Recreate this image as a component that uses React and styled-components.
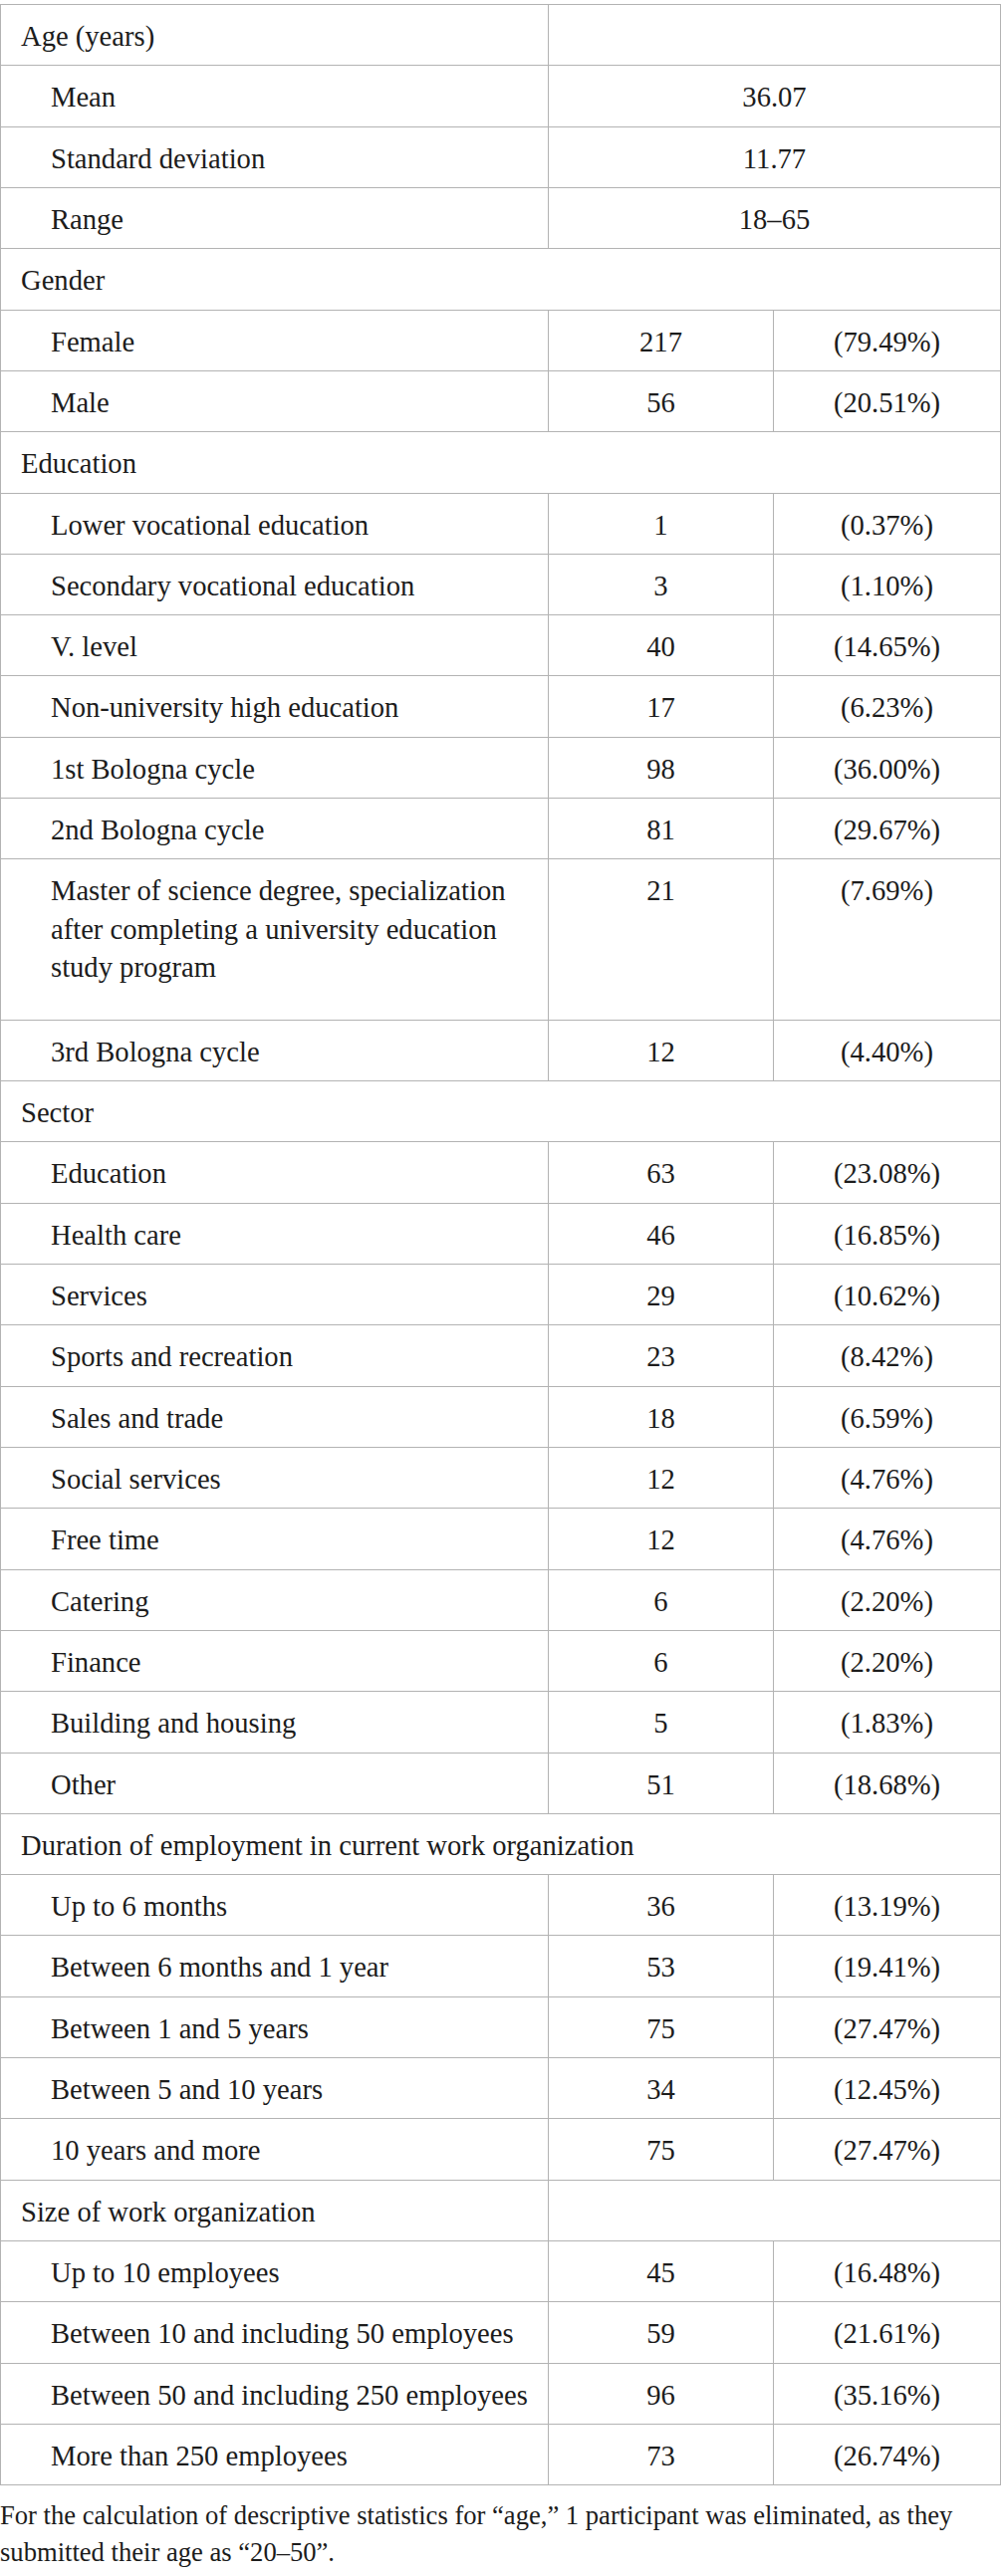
import React from "react";
import styled, { createGlobalStyle } from "styled-components";

const GlobalStyle = createGlobalStyle`
  html, body {
    margin: 0;
    padding: 0;
    background: #ffffff;
  }
  body {
    font-family: "Liberation Serif", "Times New Roman", serif;
    color: #1c1c1c;
  }
`;

const Page = styled.div`
  width: 1005px;
  padding-top: 4px;
`;

const Table = styled.div`
  display: grid;
  grid-template-columns: 550px 226px 228px;
  border-top: 1px solid #b3b3b3;
  border-left: 1px solid #b3b3b3;
  font-size: 28.6px;
  line-height: 38.3px;
`;

const Cell = styled.div`
  grid-column: span ${(p) => p.$span || 1};
  border-right: 1px solid #b3b3b3;
  border-bottom: 1px solid #b3b3b3;
  padding: 13px 20px ${(p) => (p.$tall ? 32.5 : 9.03)}px
    ${(p) => (p.$indent ? 50 : 20)}px;
  text-align: left;
  white-space: nowrap;
`;

const ValueCell = styled(Cell)`
  padding-left: 10px;
  padding-right: 10px;
  text-align: center;
`;

const Note = styled.p`
  margin: 12px 0 0;
  font-size: 26.6px;
  line-height: 36.7px;
  max-width: 1000px;
`;

const groups = [
  {
    title: "Age (years)",
    split: true,
    rows: [
      { label: "Mean", value: "36.07" },
      { label: "Standard deviation", value: "11.77" },
      { label: "Range", value: "18–65" },
    ],
  },
  {
    title: "Gender",
    rows: [
      { label: "Female", n: "217", pct: "(79.49%)" },
      { label: "Male", n: "56", pct: "(20.51%)" },
    ],
  },
  {
    title: "Education",
    rows: [
      { label: "Lower vocational education", n: "1", pct: "(0.37%)" },
      { label: "Secondary vocational education", n: "3", pct: "(1.10%)" },
      { label: "V. level", n: "40", pct: "(14.65%)" },
      { label: "Non-university high education", n: "17", pct: "(6.23%)" },
      { label: "1st Bologna cycle", n: "98", pct: "(36.00%)" },
      { label: "2nd Bologna cycle", n: "81", pct: "(29.67%)" },
      {
        label: [
          "Master of science degree, specialization",
          "after completing a university education",
          "study program",
        ],
        n: "21",
        pct: "(7.69%)",
        tall: true,
      },
      { label: "3rd Bologna cycle", n: "12", pct: "(4.40%)" },
    ],
  },
  {
    title: "Sector",
    rows: [
      { label: "Education", n: "63", pct: "(23.08%)" },
      { label: "Health care", n: "46", pct: "(16.85%)" },
      { label: "Services", n: "29", pct: "(10.62%)" },
      { label: "Sports and recreation", n: "23", pct: "(8.42%)" },
      { label: "Sales and trade", n: "18", pct: "(6.59%)" },
      { label: "Social services", n: "12", pct: "(4.76%)" },
      { label: "Free time", n: "12", pct: "(4.76%)" },
      { label: "Catering", n: "6", pct: "(2.20%)" },
      { label: "Finance", n: "6", pct: "(2.20%)" },
      { label: "Building and housing", n: "5", pct: "(1.83%)" },
      { label: "Other", n: "51", pct: "(18.68%)" },
    ],
  },
  {
    title: "Duration of employment in current work organization",
    rows: [
      { label: "Up to 6 months", n: "36", pct: "(13.19%)" },
      { label: "Between 6 months and 1 year", n: "53", pct: "(19.41%)" },
      { label: "Between 1 and 5 years", n: "75", pct: "(27.47%)" },
      { label: "Between 5 and 10 years", n: "34", pct: "(12.45%)" },
      { label: "10 years and more", n: "75", pct: "(27.47%)" },
    ],
  },
  {
    title: "Size of work organization",
    split: true,
    rows: [
      { label: "Up to 10 employees", n: "45", pct: "(16.48%)" },
      {
        label: "Between 10 and including 50 employees",
        n: "59",
        pct: "(21.61%)",
      },
      {
        label: "Between 50 and including 250 employees",
        n: "96",
        pct: "(35.16%)",
      },
      { label: "More than 250 employees", n: "73", pct: "(26.74%)" },
    ],
  },
];

function Label({ text }) {
  if (Array.isArray(text)) {
    return text.map((line, i) => (
      <React.Fragment key={i}>
        {i > 0 && <br />}
        {line}
      </React.Fragment>
    ));
  }
  return text;
}

function GroupRows({ group }) {
  return (
    <>
      {group.split ? (
        <>
          <Cell>{group.title}</Cell>
          <Cell $span={2} />
        </>
      ) : (
        <Cell $span={3}>{group.title}</Cell>
      )}
      {group.rows.map((r, i) => (
        <React.Fragment key={i}>
          <Cell $indent $tall={r.tall}>
            <Label text={r.label} />
          </Cell>
          {r.value !== undefined ? (
            <ValueCell $span={2}>{r.value}</ValueCell>
          ) : (
            <>
              <ValueCell>{r.n}</ValueCell>
              <ValueCell>{r.pct}</ValueCell>
            </>
          )}
        </React.Fragment>
      ))}
    </>
  );
}

export default function App() {
  return (
    <Page>
      <GlobalStyle />
      <Table>
        {groups.map((g, i) => (
          <GroupRows key={i} group={g} />
        ))}
      </Table>
      <Note>
        For the calculation of descriptive statistics for “age,” 1 participant
        was eliminated, as they submitted their age as “20–50”.
      </Note>
    </Page>
  );
}
